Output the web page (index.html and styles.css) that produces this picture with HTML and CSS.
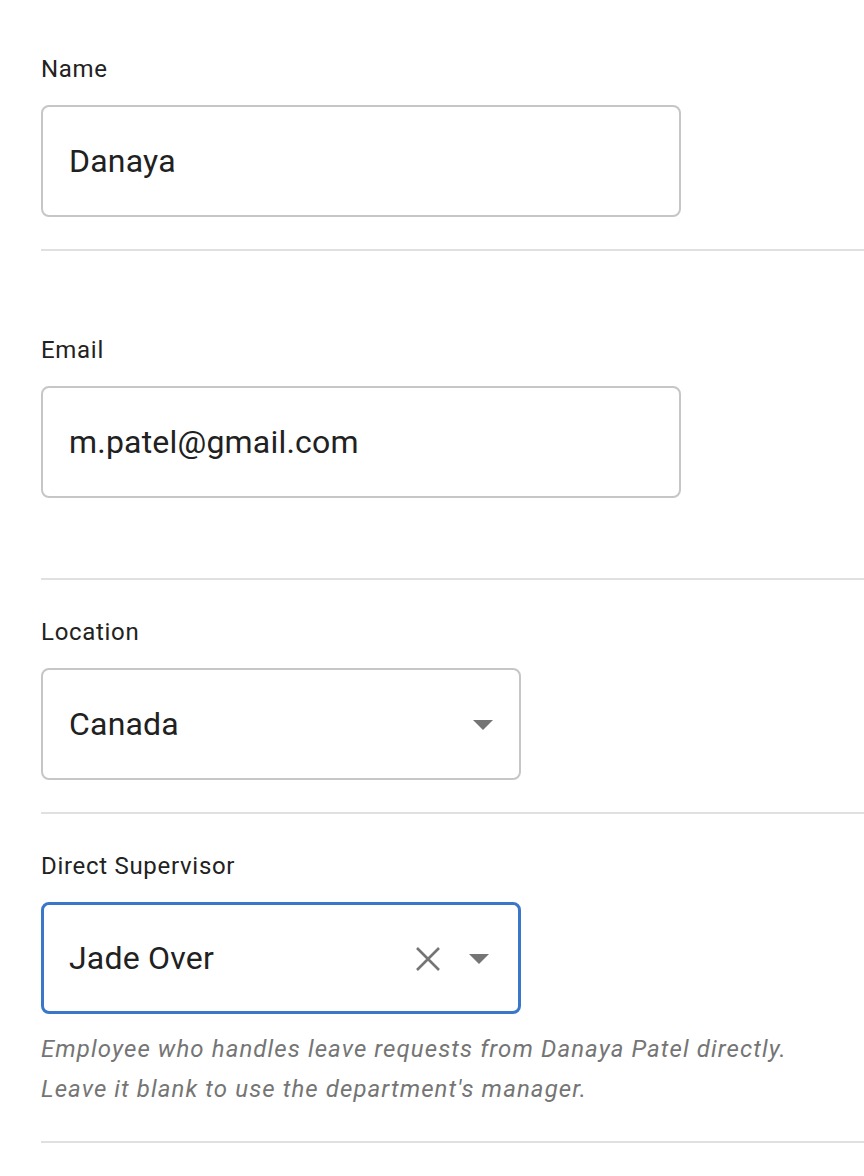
FILE: index.html
```html
<!DOCTYPE html>
<html lang="en">
<head>
<meta charset="utf-8">
<title>Employee form</title>
<link rel="stylesheet" href="styles.css">
</head>
<body>
<form class="form">
  <div class="field">
    <label class="label">Name</label>
    <div class="control text-input"><span class="value">Danaya</span></div>
  </div>
  <div class="field roomy">
    <label class="label">Email</label>
    <div class="control text-input"><span class="value">m.patel@gmail.com</span></div>
  </div>
  <div class="field">
    <label class="label">Location</label>
    <div class="control select"><span class="value">Canada</span><span class="arrow"></span></div>
  </div>
  <div class="field">
    <label class="label">Direct Supervisor</label>
    <div class="control select focused"><span class="value">Jade Over</span>
      <svg class="clear" width="24" height="24" viewBox="0 0 24 24"><path d="M1 1 L23 23 M23 1 L1 23" stroke="#757575" stroke-width="2.6" fill="none"/></svg>
      <span class="arrow"></span></div>
    <p class="help">Employee who handles leave requests from Danaya Patel directly.<br>Leave it blank to use the department's manager.</p>
  </div>
</form>
</body>
</html>
```
FILE: styles.css
```css
html, body {
  margin: 0;
  padding: 0;
  background: #ffffff;
}
body {
  font-family: Roboto, "Liberation Sans", sans-serif;
  color: #212121;
}
.form {
  padding: 17px 0 0 41px;
}
.field {
  padding: 36px 0 32px;
  border-bottom: 2px solid #e0e0e0;
}
.field.roomy {
  padding: 83px 0 80px;
}
.label {
  display: block;
  font-size: 24px;
  line-height: 32px;
  letter-spacing: 0.7px;
  color: #222222;
  margin-bottom: 20px;
}
.control {
  box-sizing: border-box;
  height: 112px;
  border: 2px solid #c6c6c6;
  border-radius: 8px;
  display: flex;
  align-items: center;
  padding: 0 26px;
}
.text-input {
  width: 640px;
}
.select {
  width: 480px;
}
.select.focused {
  border: 3px solid #3a77c9;
  padding: 0 29px 0 25px;
}
.value {
  flex: 1;
  font-size: 32px;
  letter-spacing: 0.2px;
  color: #212121;
}
.arrow {
  width: 0;
  height: 0;
  border-left: 10px solid transparent;
  border-right: 10px solid transparent;
  border-top: 10px solid #757575;
  margin-top: 2px;
}
.clear {
  margin-right: 29px;
  margin-top: 1px;
}
.help {
  margin: 15px 0 0;
  font-size: 24px;
  line-height: 40px;
  letter-spacing: 1.1px;
  font-style: italic;
  color: #757575;
}
```
